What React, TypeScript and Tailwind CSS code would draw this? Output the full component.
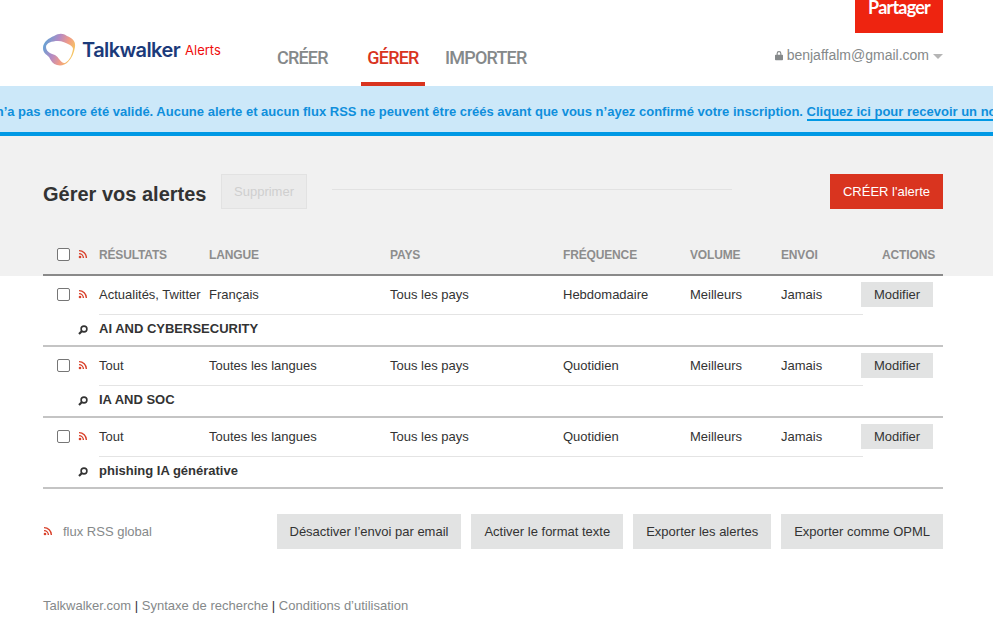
import type { ReactNode } from 'react';

const alerts = [
    { sources: 'Actualités, Twitter', lang: 'Français', freq: 'Hebdomadaire', query: 'AI AND CYBERSECURITY' },
    { sources: 'Tout', lang: 'Toutes les langues', freq: 'Quotidien', query: 'IA AND SOC' },
    { sources: 'Tout', lang: 'Toutes les langues', freq: 'Quotidien', query: 'phishing IA générative' },
];

const cols = 'grid grid-cols-[35px_21px_110px_181px_173px_127px_91px_80px_82px] items-center whitespace-nowrap';

function Rss() {
    return (
        <svg viewBox="0 0 10 10" className="mb-[2px] h-[10px] w-[10px] text-[#d9412b]" fill="none" stroke="currentColor" strokeWidth="1.4">
            <circle cx="2" cy="8" r="1.3" fill="currentColor" stroke="none" />
            <path d="M1 4.600a4.400 4.400 0 0 1 4.400 4.400" />
            <path d="M1 1.600a7.400 7.400 0 0 1 7.400 7.400" />
        </svg>
    );
}

function Search() {
    return (
        <svg viewBox="0 0 10 10" className="h-[10px] w-[10px] text-[#333]" fill="none" stroke="currentColor">
            <circle cx="6" cy="4" r="2.900" strokeWidth="1.600" />
            <path d="M4 6 1 9" strokeWidth="2.200" />
        </svg>
    );
}

function Check() {
    return <span className="mb-[2px] ml-[14px] block h-[13px] w-[13px] rounded-[2px] border border-[#767676] bg-white" />;
}

function GrayButton({ children }: { children: ReactNode }) {
    return <button className="h-[35px] bg-[#e2e3e3] px-[13px] text-[13px] text-[#333]">{children}</button>;
}

export default function App() {
    return (
        <div className="min-h-[640px] bg-white font-['Liberation_Sans',sans-serif] text-[13px] text-[#333]">
            <header className="ml-[43px] flex h-[86px] w-[900px] items-start">
                <div className="mt-[33px] flex w-[234px] items-center">
                    <svg viewBox="0 0 33 33" className="h-[33px] w-[33px]">
                        <defs>
                            <linearGradient id="logo" x1="0" y1="0.1" x2="1" y2="0.5">
                                <stop offset="0" stopColor="#4fa8d8" />
                                <stop offset="0.45" stopColor="#b58ac4" />
                                <stop offset="0.72" stopColor="#f09a88" />
                                <stop offset="1" stopColor="#f6c860" />
                            </linearGradient>
                        </defs>
                        <path fill="url(#logo)" d="M0 15C0 9 6 5 11 3c5-3 9-3 13 0 5 2 9 5 8 11-1 6-3 11-7 15-3 3-7 4-11 3-4-1-6-4-8-8C3 21 0 20 0 15Z" />
                        <path fill="#fff" d="M3 14C3 10 9 8 15 8c4 0 8 2 12 4 2 1 3 3 3 4-1 6-3 11-8 14-4 1-6-6-10-8-2-1-4-1-5-2-2-1-4-3-4-6Z" />
                    </svg>
                    <span className="ml-[6px] font-['Inter',sans-serif] text-[20px] font-semibold tracking-[-0.6px] text-[#1b3a7a]">Talkwalker</span>
                    <span className="ml-[5px] mt-[3px] font-['Inter',sans-serif] text-[13px] text-[#f00d0d]">Alerts</span>
                </div>
                <nav className="mt-[38px] flex font-['Roboto',sans-serif] text-[18px] font-medium tracking-[-0.8px] text-[#85898a]">
                    <a className="flex h-[48px] w-[84px] items-center pb-[9px]">CRÉER</a>
                    <a className="flex h-[48px] w-[64px] items-center justify-center border-b-[4px] border-[#d9341f] pb-[5px] text-[#d9341f]">GÉRER</a>
                    <a className="flex h-[48px] items-center pb-[9px] pl-[20px]">IMPORTER</a>
                </nav>
                <div className="ml-auto flex flex-col items-end">
                    <a className="flex h-[33px] w-[88px] items-end justify-center bg-[#ee2410] pb-[14px] font-['Lato',sans-serif] text-[18px] font-bold leading-[24px] tracking-[-0.8px] text-white">Partager</a>
                    <div className="mt-[12px] flex items-center text-[14px] text-[#85898a]">
                        <svg viewBox="0 0 10 12" className="mr-[4px] h-[11px] w-[8px]" fill="#85898a">
                            <path d="M1 5h1V3.500a3 3 0 0 1 6 0V5h1a1 1 0 0 1 1 1v5a1 1 0 0 1-1 1H1a1 1 0 0 1-1-1V6a1 1 0 0 1 1-1Zm2.400 0h3.200V3.500a1.600 1.600 0 0 0-3.200 0Z" />
                        </svg>
                        benjaffalm@gmail.com
                        <span className="ml-[4px] mt-[2px] h-0 w-0 border-x-[5px] border-t-[5px] border-x-transparent border-t-[#b5b5b5]" />
                    </div>
                </div>
            </header>

            <div className="flex h-[50px] items-center overflow-hidden whitespace-nowrap border-b-[4px] border-[#0099e5] bg-[#cce8f9] pt-[5px] text-[13px] font-bold text-[#0f8fdc]">
                <span className="ml-[-90px] shrink-0">
                    Votre compte n’a pas encore été validé. Aucune alerte et aucun flux RSS ne peuvent être créés avant que vous n’ayez confirmé votre inscription.{' '}
                    <a className="border-b-2 border-[#0099e5]">Cliquez ici pour recevoir un nouveau lien de confirmation.</a>
                </span>
            </div>

            <section className="h-[140px] bg-[#f1f1f1]">
                <div className="ml-[43px] w-[900px]">
                    <div className="flex items-start pt-[38px]">
                        <h1 className="mt-[7px] w-[178px] text-[20px] font-bold leading-[26px]">Gérer vos alertes</h1>
                        <button className="h-[35px] w-[86px] border border-[#e2e2e2] bg-[#ebebeb] text-[13px] text-[#cfcfcf]">Supprimer</button>
                        <div className="ml-[25px] mt-[15px] h-px w-[400px] bg-[#e2e2e2]" />
                        <button className="ml-auto h-[35px] w-[113px] bg-[#d9341f] text-[13px] text-white">CRÉER l'alerte</button>
                    </div>
                    <div className={`${cols} mt-[25px] h-[42px] border-b-2 border-[#8a8a8a] pt-[2px] text-[12px] font-bold tracking-[-0.15px] text-[#8d8d8d]`}>
                        <Check />
                        <Rss />
                        <span>RÉSULTATS</span>
                        <span>LANGUE</span>
                        <span>PAYS</span>
                        <span>FRÉQUENCE</span>
                        <span>VOLUME</span>
                        <span>ENVOI</span>
                        <span className="pr-[8px] text-right">ACTIONS</span>
                    </div>
                </div>
            </section>

            <main className="ml-[43px] w-[900px]">
                {alerts.map((a) => (
                    <div key={a.query} className="h-[71px] border-b-2 border-[#c4c4c4]">
                        <div className={`${cols} h-[38px]`}>
                            <Check />
                            <Rss />
                            <span>{a.sources}</span>
                            <span>{a.lang}</span>
                            <span>Tous les pays</span>
                            <span>{a.freq}</span>
                            <span>Meilleurs</span>
                            <span>Jamais</span>
                            <button className="mb-[2px] h-[25px] w-[72px] bg-[#e2e3e3] pt-[2px] text-[13px]">Modifier</button>
                        </div>
                        <div className="ml-[35px] flex h-[31px] w-[785px] items-center">
                            <span className="w-[21px]"><Search /></span>
                            <div className="flex h-full flex-1 items-center border-t border-[#e4e4e4] pb-[3px] font-bold">{a.query}</div>
                        </div>
                    </div>
                ))}
                <div className="mt-[25px] flex items-center">
                    <Rss />
                    <span className="ml-[10px] text-[#85898a]">flux RSS global</span>
                    <div className="ml-auto flex gap-[10px]">
                        <GrayButton>Désactiver l’envoi par email</GrayButton>
                        <GrayButton>Activer le format texte</GrayButton>
                        <GrayButton>Exporter les alertes</GrayButton>
                        <GrayButton>Exporter comme OPML</GrayButton>
                    </div>
                </div>
                <footer className="mt-[47px] text-[#85898a]">
                    Talkwalker.com <span className="text-[#333]">|</span> Syntaxe de recherche <span className="text-[#333]">|</span> Conditions d’utilisation
                </footer>
            </main>
        </div>
    );
}
